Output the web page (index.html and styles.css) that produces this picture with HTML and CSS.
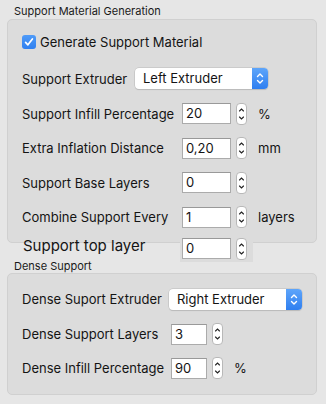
FILE: index.html
```html
<!DOCTYPE html>
<html lang="en">
<head>
    <meta charset="UTF-8">
    <meta name="viewport" content="width=device-width, initial-scale=1.0">
    <title>Support Material</title>
    <link rel="stylesheet" href="styles.css">
</head>
<body>
    <div class="group-title">Support Material Generation</div>
    <div class="group first">

        <label class="check-row">
            <span class="checkbox">
                <svg width="14" height="14" viewBox="0 0 14 14"><path d="M3.6 7.4 L5.9 9.8 L10.4 4" fill="none" stroke="#fff" stroke-width="1.7" stroke-linecap="round" stroke-linejoin="round"/></svg>
            </span>
            Generate Support Material
        </label>

        <div class="row popup-row">
            <span class="label lw-113">Support Extruder</span>
            <div class="popup">
                <span class="popup-text">Left Extruder</span>
                <span class="popup-arrows">
                    <svg width="16" height="21" viewBox="0 0 16 21"><path d="M5.5 8.5 L8 6 L10.5 8.5 M5.5 12.5 L8 15 L10.5 12.5" fill="none" stroke="#fff" stroke-width="1.4" stroke-linecap="round" stroke-linejoin="round"/></svg>
                </span>
            </div>
        </div>

        <div class="row num-row">
            <span class="label lw-160">Support Infill Percentage</span>
            <span class="field fw-49">20</span>
            <span class="stepper"><svg width="11" height="22" viewBox="0 0 11 22"><path d="M3.5 8 L5.5 6 L7.5 8 M3.5 14 L5.5 16 L7.5 14" fill="none" stroke="#222" stroke-width="1.1" stroke-linecap="round"/></svg></span>
            <span class="unit">%</span>
        </div>

        <div class="row num-row">
            <span class="label lw-160">Extra Inflation Distance</span>
            <span class="field fw-49">0,20</span>
            <span class="stepper"><svg width="11" height="22" viewBox="0 0 11 22"><path d="M3.5 8 L5.5 6 L7.5 8 M3.5 14 L5.5 16 L7.5 14" fill="none" stroke="#222" stroke-width="1.1" stroke-linecap="round"/></svg></span>
            <span class="unit">mm</span>
        </div>

        <div class="row num-row">
            <span class="label lw-160">Support Base Layers</span>
            <span class="field fw-49">0</span>
            <span class="stepper"><svg width="11" height="22" viewBox="0 0 11 22"><path d="M3.5 8 L5.5 6 L7.5 8 M3.5 14 L5.5 16 L7.5 14" fill="none" stroke="#222" stroke-width="1.1" stroke-linecap="round"/></svg></span>
        </div>

        <div class="row num-row">
            <span class="label lw-160">Combine Support Every</span>
            <span class="field fw-49">1</span>
            <span class="stepper"><svg width="11" height="22" viewBox="0 0 11 22"><path d="M3.5 8 L5.5 6 L7.5 8 M3.5 14 L5.5 16 L7.5 14" fill="none" stroke="#222" stroke-width="1.1" stroke-linecap="round"/></svg></span>
            <span class="unit">layers</span>
        </div>
    </div>

    <div class="row top-layer">
        <span class="label big-label">Support top layer</span>
        <div class="field-back">
            <span class="field fw-49">0</span>
            <span class="stepper"><svg width="11" height="22" viewBox="0 0 11 22"><path d="M3.5 8 L5.5 6 L7.5 8 M3.5 14 L5.5 16 L7.5 14" fill="none" stroke="#222" stroke-width="1.1" stroke-linecap="round"/></svg></span>
        </div>
    </div>

    <div class="group-title dense-title">Dense Support</div>
    <div class="group second">

        <div class="row popup-row">
            <span class="label lw-147">Dense Suport Extruder</span>
            <div class="popup">
                <span class="popup-text">Right Extruder</span>
                <span class="popup-arrows">
                    <svg width="16" height="21" viewBox="0 0 16 21"><path d="M5.5 8.5 L8 6 L10.5 8.5 M5.5 12.5 L8 15 L10.5 12.5" fill="none" stroke="#fff" stroke-width="1.4" stroke-linecap="round" stroke-linejoin="round"/></svg>
                </span>
            </div>
        </div>

        <div class="row num-row">
            <span class="label lw-149">Dense Support Layers</span>
            <span class="field fw-36">3</span>
            <span class="stepper"><svg width="11" height="22" viewBox="0 0 11 22"><path d="M3.5 8 L5.5 6 L7.5 8 M3.5 14 L5.5 16 L7.5 14" fill="none" stroke="#222" stroke-width="1.1" stroke-linecap="round"/></svg></span>
        </div>

        <div class="row num-row last">
            <span class="label lw-149">Dense Infill Percentage</span>
            <span class="field fw-36">90</span>
            <span class="stepper"><svg width="11" height="22" viewBox="0 0 11 22"><path d="M3.5 8 L5.5 6 L7.5 8 M3.5 14 L5.5 16 L7.5 14" fill="none" stroke="#222" stroke-width="1.1" stroke-linecap="round"/></svg></span>
            <span class="unit">%</span>
        </div>
    </div>
</body>
</html>
```

FILE: styles.css
```css
html{
    background: #e6e6e6;
}

body{
    margin: 0;
    padding: 0 9px 0 7px;
    font-family: Inter, "Liberation Sans", sans-serif;
    font-size: 13px;
    color: #141414;
}

.group-title{
    font-size: 11px;
    line-height: 16px;
    padding-top: 3px;
    padding-left: 7px;
    color: #1a1a1a;
}

.dense-title{
    padding-top: 0;
    margin-top: -3px;
    line-height: 14px;
}

.group{
    background-color: #dcdcdc;
    border: 1px solid #d0d0d0;
    border-radius: 5px;
    padding: 0 14px 14px 14px;
}

.group.first{
    padding-top: 11px;
}

.group.second{
    padding-top: 15px;
    padding-bottom: 15px;
}

.check-row{
    display: flex;
    align-items: center;
    height: 21px;
    gap: 4px;
}

.checkbox{
    width: 14px;
    height: 14px;
    border-radius: 3px;
    background: linear-gradient(#4f9bf8, #2f80f0);
    display: flex;
}

.row{
    display: flex;
    align-items: center;
    height: 21px;
}

.first .popup-row{
    margin-top: 16px;
}

.first .num-row{
    margin-top: 13.5px;
}

.first .popup-row + .num-row{
    margin-top: 14px;
}

.second .num-row{
    margin-top: 14px;
}

.second .num-row.last{
    margin-top: 13px;
}

.label{
    flex: none;
    white-space: nowrap;
}

.lw-113{ width: 113px; }
.lw-147{ width: 147px; }
.lw-149{ width: 149px; }
.lw-160{ width: 160px; }

.popup{
    display: flex;
    width: 133px;
    height: 21px;
    background: #fff;
    border-radius: 4px;
    box-shadow: 0 0 0 0.5px #b9b9b9, 0 1px 1px rgba(0,0,0,0.15);
    overflow: hidden;
}

.second .popup{
    width: 134px;
}

.popup-text{
    flex: 1;
    padding-left: 8px;
    line-height: 21px;
}

.popup-arrows{
    width: 16px;
    display: flex;
    background: linear-gradient(#5ea5fa, #2f7ff0);
}

.field{
    box-sizing: border-box;
    height: 21px;
    border: 1px solid #ababab;
    border-top-color: #999;
    background: #fff;
    padding-left: 3px;
    line-height: 19px;
}

.fw-49{ width: 49px; }
.fw-36{ width: 36px; }

.stepper{
    box-sizing: border-box;
    width: 11px;
    height: 22px;
    margin-left: 5px;
    background: #fff;
    border: 1px solid #b8b8b8;
    border-radius: 4px;
    display: flex;
    align-items: center;
    justify-content: center;
}

.stepper svg{
    margin: -1px;
    flex: none;
}

.unit{
    margin-left: 11px;
}

.top-layer{
    position: relative;
    margin-top: -9px;
    height: 28px;
    padding-left: 16px;
}

.big-label{
    font-size: 15px;
    width: 157px;
    margin-top: -5px;
}

.field-back{
    display: flex;
    align-items: center;
    background: #dcdcdc;
    height: 28px;
    padding: 2px 6px 0 2px;
    box-sizing: border-box;
}
```
